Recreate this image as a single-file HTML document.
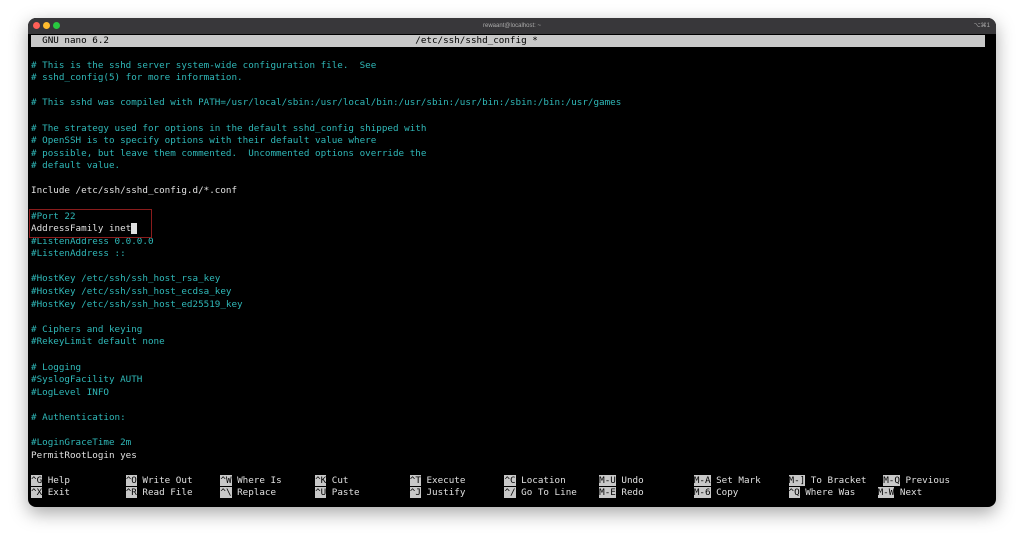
<!DOCTYPE html>
<html><head><style>
body{margin:0;width:1024px;height:545px;background:#fff;overflow:hidden;position:relative;font-family:"Liberation Mono",monospace}
.win{position:absolute;left:28px;top:18px;width:968px;height:489px;background:#000;border-radius:8px;box-shadow:0 6px 18px rgba(0,0,0,.35);overflow:hidden}
.tb{position:absolute;left:0;top:0;width:968px;height:16px;background:#38373a;color:#aaa;font:6px "Liberation Sans",sans-serif;text-align:center;line-height:16px}
.dot{position:absolute;top:4px;width:7px;height:7px;border-radius:50%}
.hdr{position:absolute;left:3px;top:17px;width:954px;height:12px;background:#c8c8c8}
pre{position:absolute;left:3px;top:16.5px;margin:0;font-size:9.25px;line-height:12.58px;color:#2fb8b8;white-space:pre}
.w{color:#e0e0e0}.k{background:#c8c8c8;color:#000}.h{color:#000}
.box{position:absolute;left:29px;top:209px;width:121px;height:27px;border:1px solid #8a1c1c}
.cur{background:#e0e0e0}
</style></head><body>
<div class="win">
<div class="tb">rewaant@localhost: ~<span style="position:absolute;right:6px">⌥⌘1</span>
<div class="dot" style="left:5px;background:#ff5f57"></div><div class="dot" style="left:15px;background:#febc2e"></div><div class="dot" style="left:25px;background:#28c840"></div></div>
<div class="hdr"></div>
<pre><span class="h">  GNU nano 6.2                                                       /etc/ssh/sshd_config *</span>

# This is the sshd server system-wide configuration file.  See
# sshd_config(5) for more information.

# This sshd was compiled with PATH=/usr/local/sbin:/usr/local/bin:/usr/sbin:/usr/bin:/sbin:/bin:/usr/games

# The strategy used for options in the default sshd_config shipped with
# OpenSSH is to specify options with their default value where
# possible, but leave them commented.  Uncommented options override the
# default value.

<span class="w">Include /etc/ssh/sshd_config.d/*.conf</span>

#Port 22
<span class="w">AddressFamily inet<span class="cur"> </span></span>
#ListenAddress 0.0.0.0
#ListenAddress ::

#HostKey /etc/ssh/ssh_host_rsa_key
#HostKey /etc/ssh/ssh_host_ecdsa_key
#HostKey /etc/ssh/ssh_host_ed25519_key

# Ciphers and keying
#RekeyLimit default none

# Logging
#SyslogFacility AUTH
#LogLevel INFO

# Authentication:

#LoginGraceTime 2m
<span class="w">PermitRootLogin yes</span>

<span class="w"><span class="k">^G</span> Help          <span class="k">^O</span> Write Out     <span class="k">^W</span> Where Is      <span class="k">^K</span> Cut           <span class="k">^T</span> Execute       <span class="k">^C</span> Location      <span class="k">M-U</span> Undo         <span class="k">M-A</span> Set Mark     <span class="k">M-]</span> To Bracket   <span class="k">M-Q</span> Previous</span>
<span class="w"><span class="k">^X</span> Exit          <span class="k">^R</span> Read File     <span class="k">^\</span> Replace       <span class="k">^U</span> Paste         <span class="k">^J</span> Justify       <span class="k">^/</span> Go To Line    <span class="k">M-E</span> Redo         <span class="k">M-6</span> Copy         <span class="k">^Q</span> Where Was    <span class="k">M-W</span> Next</span></pre>
</div>
<div class="box"></div>
</body></html>
